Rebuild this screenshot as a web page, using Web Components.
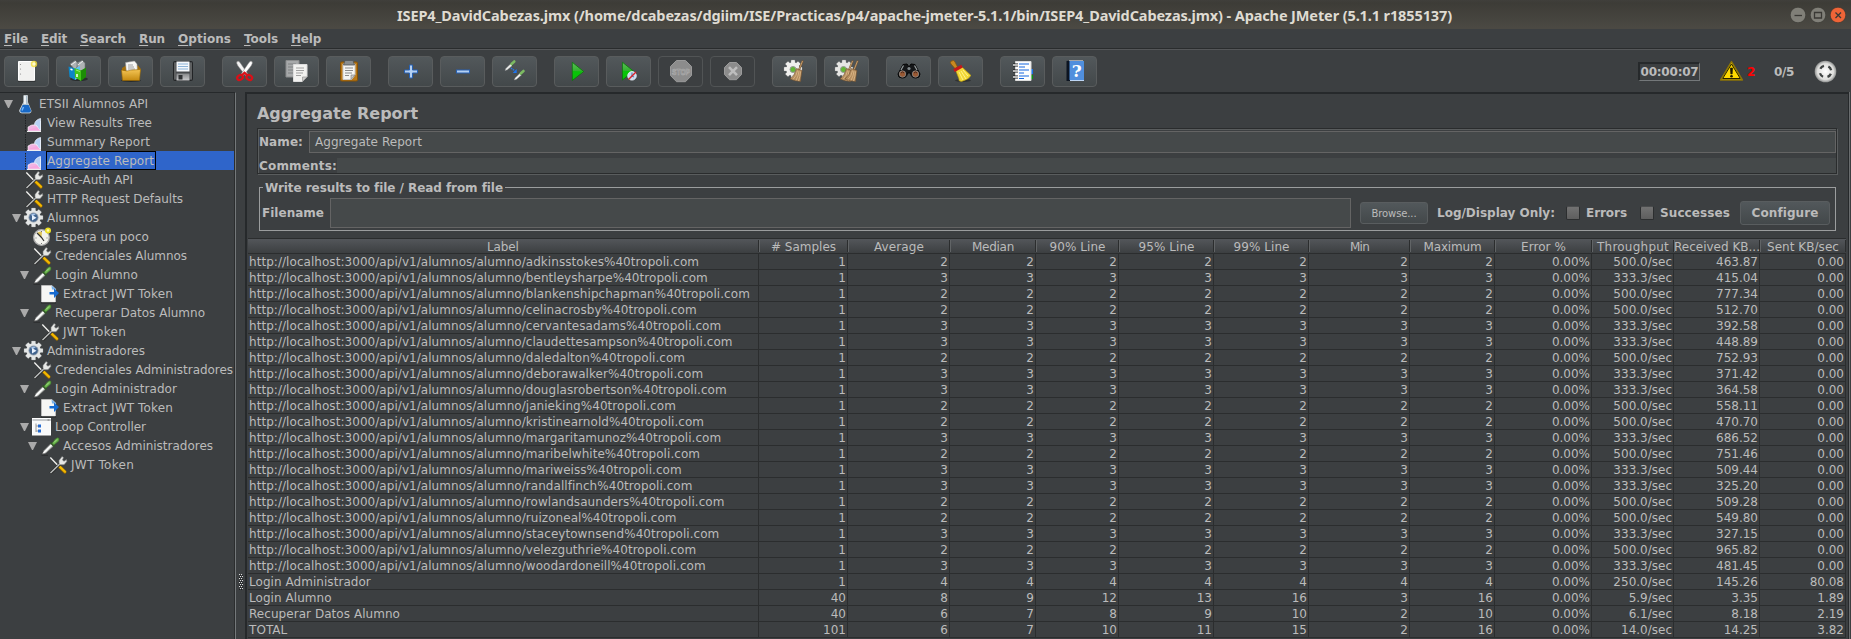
<!DOCTYPE html>
<html lang="es">
<head>
<meta charset="utf-8">
<title>Apache JMeter</title>
<style>
html,body{margin:0;height:100%;overflow:hidden;background:#3c3f41}
body{font-family:"DejaVu Sans",sans-serif;font-size:12px;color:#bbb}
</style>
</head>
<body>
<jm-app></jm-app>
<script>
const define=(name,css,html,init)=>customElements.define(name,class extends HTMLElement{
  connectedCallback(){
    if(this.shadowRoot)return;
    const r=this.attachShadow({mode:'open'});
    r.innerHTML='<style>*{box-sizing:border-box}'+css+'</style>'+(typeof html==='function'?html(this):html);
    if(init)init(this,r);
  }
});

/* 25px toolbar glyphs and 20px tree glyphs */
const gear=(cx,cy,r,fill,stroke)=>{
  let t='';
  for(let i=0;i<8;i++)t+=`<rect x="${cx-r*.22}" y="${cy-r}" width="${r*.44}" height="${r*.5}" rx=".6" transform="rotate(${i*45} ${cx} ${cy})"/>`;
  return `<g fill="${fill}" stroke="${stroke}" stroke-width=".3">${t}<circle cx="${cx}" cy="${cy}" r="${r*.76}" stroke="none"/></g>`;
};
const grad=(id,a,b,h)=>`<linearGradient id="${id}" x1="0" y1="0" x2="${h?1:0}" y2="${h?0:1}"><stop stop-color="${a}"/><stop offset="1" stop-color="${b}"/></linearGradient>`;
const broom=(dx)=>`<g transform="translate(${dx} 0)"><path d="M20.800 1.500L17 11" stroke="#7b5836" stroke-width="2"/><path d="M20.500 2L17 11" stroke="#c29c6b" stroke-width="1"/><path d="M14.500 9.500L20 11.500Q19 17 18.500 22.500Q13 22 8 20Q13 16 14.500 9.500Z" fill="#b48c5e" stroke="#70502f" stroke-width=".6"/><path d="M15.500 11.500Q14.500 17 11 20.500M17 12Q16.500 17 14 21.500M18.500 12.500Q18 18 16.500 22" stroke="#dfbc8c" stroke-width=".8" fill="none"/></g>`;
const dropper=`<path d="M1.500 19.300H8" stroke="#26282a" stroke-width=".8"/><path d="M2.500 18L4 14.500L11 7.500L13.500 10L6 17Z" fill="#d3d7d3" stroke="#777" stroke-width=".7"/><path d="M3.500 17L12 8.500" stroke="#fff" stroke-width="1.200"/><path d="M10.500 6.500L14.500 10.500" stroke="#315528" stroke-width="1.800"/><path d="M12 7.500L15 3.500Q17.500 .8 19 2.500Q19.500 4.500 17 6.500L13.800 9Z" fill="#69b34c" stroke="#3e7929" stroke-width=".6"/><path d="M14 6.500L17 3.500" stroke="#a8de8d"/>`;
const mini=`<path d="M.8 10.200L1.600 8.200L6.500 3.600L8 5.200L3 9.600Z" fill="#eef0ee" stroke="#999" stroke-width=".4"/><path d="M6 3L8.600 5.600" stroke="#315528" stroke-width="1"/><path d="M7.200 3.800L10 1.300" stroke="#7cba62" stroke-width="2.600" stroke-linecap="round"/>`;
const play=(s)=>`<defs>${grad('p','#5fbf5a','#00a400')}</defs><path d="M8.300 3.300L19.700 12.500L8.300 21.500Z" transform="${s||''}" fill="url(#p)" stroke="#087a08" stroke-width=".8"/><path d="M9 12L18.500 12.400L9 20.200Z" transform="${s||''}" fill="#08c408"/>`;
const ICONS={
 new:`<path d="M4.500 2.500H20.500V21.500H4.500Z" fill="#f1f1ef" stroke="#fff"/><path d="M4 22.300H21.500" stroke="#282a2b" stroke-width=".8"/><g fill="#888"><circle cx="6.500" cy="5.500" r=".6"/><circle cx="6.500" cy="10" r=".6"/><circle cx="6.500" cy="15" r=".6"/></g><circle cx="20" cy="5" r="3.200" fill="#f2df39" opacity=".8"/><circle cx="20" cy="5" r="1.700" fill="#fffbd0"/>`,
 templates:`<ellipse cx="13" cy="20" rx="9" ry="2" fill="#292c2e"/><path d="M4 5L9 1.500L13 5L9 11ZM11 4L16 1.500L19 4V11L11 12Z" fill="#aeb2b4" stroke="#6c7072" stroke-width=".6"/><path d="M5 6L10 2.500M12 6L17 2" stroke="#eee"/><path d="M2.500 7.500L9 9.500V21L3.500 18Z" fill="#0d86c7"/><path d="M9 9.500L14 7V18L9 21Z" fill="#5fc3f1"/><path d="M4.500 10L6.500 11" stroke="#fff" stroke-width="1.500"/><path d="M8.500 9L15 11.500V22L9 18.500Z" fill="#43c71a"/><path d="M15 11.500L20 8.500V18L15 22Z" fill="#1c8c05"/><path d="M10 11L14 12.500" stroke="#96ee6e"/><path d="M11 15V18" stroke="#fff" stroke-width="1.500"/>`,
 open:`<defs>${grad('o','#f4c555','#c58a10')}</defs><ellipse cx="13" cy="21.500" rx="10" ry="1.500" fill="#292c2e"/><path d="M4 9L8 6.500H20L22.500 9.500V13H4Z" fill="#a16d0b"/><path d="M7.500 3.500L16.500 2L19 5L19.500 14H8.500Z" fill="#f7f7f5" stroke="#999" stroke-width=".5"/><path d="M10 6H15M10 8H16M10 10H17" stroke="#888" stroke-width=".8"/><path d="M3.500 11Q9 13 14 11L22.500 10.500L21.500 21.500H4.500Z" fill="url(#o)" stroke="#9b6800" stroke-width=".6"/>`,
 save:`<defs>${grad('s','#858789','#c9cacc')}</defs><rect x="3.500" y="2.500" width="19" height="19" rx="1" fill="#474a4d" stroke="#222426"/><path d="M5 4V20M21 4V20" stroke="#777"/><rect x="6.500" y="2.500" width="13" height="10" fill="#f5f8fc"/><path d="M8 5H18M8 7.500H18M8 10H18" stroke="#8db4d8"/><rect x="6.500" y="14.500" width="13" height="7" fill="url(#s)"/><rect x="8.500" y="16" width="4" height="4.500" fill="#303335"/>`,
 cut:`<path d="M5 2.500Q4 4 6 7L13.500 16.500L15.500 14.500L8 3.500Q6.500 1.500 5 2.500Z" fill="#f3f3f3" stroke="#888" stroke-width=".5"/><path d="M20 2.500Q21 4 19 7L11.500 16.500L9.500 14.500L17 3.500Q18.500 1.500 20 2.500Z" fill="#fff" stroke="#888" stroke-width=".5"/><g fill="none" stroke="#d91018" stroke-width="2.200"><ellipse cx="8" cy="18.500" rx="3" ry="2.300" transform="rotate(-35 8 18.500)"/><ellipse cx="17.300" cy="18.500" rx="3" ry="2.300" transform="rotate(35 17.300 18.500)"/><path d="M10 16L12.500 13.800L15.200 16"/></g>`,
 copy:`<path d="M2 1.500H15V18H2Z" fill="#a7a9aa" stroke="#8a8c8d"/><path d="M4 5H12M4 8H9M4 11H9M4 14H9" stroke="#7f8182"/><path d="M9.500 5.500H23V18L18.500 22.500H9.500Z" fill="#f2f2f0" stroke="#ddd"/><path d="M12 9H20M12 11.500H20M12 14H19M12 16.500H17" stroke="#a1a1a1"/><path d="M18.500 22.500V18H23Z" fill="#cfcfcd" stroke="#888" stroke-width=".6"/>`,
 paste:`<rect x="4.500" y="3" width="17" height="19" rx="1.300" fill="#b97818" stroke="#865205"/><path d="M7 5H19V16L15.500 20.500H7Z" fill="#f5f5f3" stroke="#ccc"/><path d="M9 1.500H17L18.500 6H7.500Z" fill="#898d8f" stroke="#505456" stroke-width=".8"/><path d="M9 9H17M9 11.500H17M9 14H16M9 16.500H13" stroke="#8b8b8b"/><path d="M15 20.500V16H19Z" fill="#ccc" stroke="#777" stroke-width=".6"/>`,
 plus:`<path d="M11.500 6H14.500V11H19.500V14H14.500V19H11.500V14H6.500V11H11.500Z" fill="#b4d0f2" stroke="#2861b2"/>`,
 minus:`<rect x="6.500" y="11" width="13" height="3" fill="#b4d0f2" stroke="#2861b2"/>`,
 toggle:`<g transform="translate(2.300 1.200)">${mini}</g><g transform="translate(11.500 10.700)">${mini}</g><path d="M9 9L13 12" stroke="#2477ea" stroke-width="1.300" stroke-dasharray="1.500 .8"/><path d="M14.700 10V14H10.700Z" fill="#1c74f0"/>`,
 start:play(),
 nopause:play('translate(-1.700 0) scale(.98)')+`<circle cx="16" cy="16.800" r="4.300" fill="#c8daf0" stroke="#eef4fb" stroke-width=".8"/><path d="M16 13.500V17L18 18" stroke="#4876a7"/><path d="M12.500 20.500L20 13" stroke="#da2229" stroke-width="1.500"/>`,
 stop:`<path d="M8.500 1.500H17.500L23.500 7.500V16.500L17.500 22.700H8.500L2.500 16.500V7.500Z" fill="#8c8c8c" stroke="#9a9a9a"/><text x="13" y="15.600" text-anchor="middle" textLength="18" lengthAdjust="spacingAndGlyphs" font-family="Liberation Sans" font-size="9.500" fill="#8c8c8c" stroke="#b0b0b0" stroke-width=".6">STOP</text>`,
 shutdown:`<path d="M9.500 3.500H16.500L21.500 8.500V15.500L16.500 20.700H9.500L4.500 15.500V8.500Z" fill="#8c8c8c" stroke="#9b9b9b"/><path d="M9 8.200L17 16.200M17 8.200L9 16.200" stroke="#bdbdbd" stroke-width="2.600"/>`,
 clear:gear(11,10,9,'#f0f0ee','#999')+`<circle cx="11" cy="10.500" r="3" fill="#62b735" stroke="#999"/>`+broom(0),
 clearall:gear(10,10,9,'#e6e6e4','#999')+`<circle cx="9.500" cy="10.500" r="3" fill="#62b735" stroke="#999"/>`+broom(-2)+broom(3),
 search:`<path d="M7 5.500L11 5L13 8L15 5L19 5.500L24 15Q24 19 20 19Q15 19 14.500 14H11.500Q11 19 6 19Q2 19 2 15Z" fill="#151719" stroke="#050505"/><path d="M7.500 6.500L5 11M18.500 6.500L21 11" stroke="#92989a" stroke-width="1.300"/><circle cx="6.500" cy="15" r="3.200" fill="#9a5a34" stroke="#888" stroke-width=".8"/><circle cx="19.500" cy="15" r="3.200" fill="#9a5a34" stroke="#888" stroke-width=".8"/><path d="M5 14Q6.500 12 8 14M18 14Q19.500 12 21 14" stroke="#4b2619" fill="none"/><circle cx="13" cy="9.500" r="1.600" fill="#80878a"/>`,
 searchclear:`<ellipse cx="15" cy="21.500" rx="8" ry="1.500" fill="#303234"/><path d="M3 2.200Q6 .5 7 3L9.500 8L7 9.500L3 5Q1.800 3.500 3 2.200Z" fill="#c88921" stroke="#855209" stroke-width=".7"/><path d="M7.500 11L14 8L23 16.500Q20 21 13.500 22.500Q10 22 11 20Z" fill="#f1d736" stroke="#b99a09" stroke-width=".6"/><path d="M11 13L15 21M13 12L18 20M15 11L20 17" stroke="#fff38a"/><path d="M6 11.700L14 7.200" stroke="#c5171a" stroke-width="3.200"/>`,
 func:`<rect x="19" y="10" width="4" height="5" fill="#1972e8"/><rect x="19" y="16" width="4" height="4" fill="#0a910f"/><path d="M5.500 2.500H21V21.500H5.500Z" fill="#fdfdfd" stroke="#ddd"/><path d="M9 5H19M9 8H15M9 11H19M9 14H14M9 17H19M9 19.500H14" stroke="#1466df" stroke-width="1.200"/><path d="M3 6H8M3 12H8M3 18H8" stroke="#17191a" stroke-width="3.200"/><path d="M3 6H8M3 12H8M3 18H8" stroke="#eee" stroke-width="1.500"/>`,
 help:`<path d="M4.500 2L8 1.500V22H4.500Z" fill="#0c1421"/><rect x="7.500" y="2" width="14.500" height="19" fill="#508fdd"/><path d="M7 1.500H21" stroke="#bbb" stroke-width=".8"/><path d="M8 21.500H22" stroke="#bed6f5"/><text x="14.800" y="17.700" text-anchor="middle" font-family="DejaVu Serif" font-size="17" fill="#fff">?</text>`,
 warn:`<path d="M12.500 2.500L23.500 21H1.500Z" fill="#d9b400" stroke="#8c7407" stroke-width="1.400" stroke-linejoin="round"/><path d="M12.500 5L21.300 19.500H3.700Z" fill="#ffd900" stroke="#262100" stroke-width="1"/><path d="M11.400 9H13.600L13.200 15H11.800Z" fill="#1b1700" stroke="#1b1700" stroke-width=".6"/><circle cx="12.500" cy="17.200" r="1.300" fill="#1b1700"/>`,
 remote:`<defs><radialGradient id="r"><stop stop-color="#fff"/><stop offset=".75" stop-color="#dededc"/><stop offset="1" stop-color="#919392"/></radialGradient></defs><circle cx="12.500" cy="12.500" r="10.800" fill="url(#r)"/><circle cx="12.500" cy="12.500" r="5.800" fill="none" stroke="#404443" stroke-width="2.300" stroke-dasharray="4.500 4.610" stroke-dashoffset="-2.300"/>`,
 flask:`<path d="M7.800 1.500V8L3.500 16.500Q3.500 19 6 19H13.500Q15.500 18.500 15 16.500L11.500 8V1.500Z" fill="#a9bdcc" stroke="#dfe6ea" stroke-width=".7"/><path d="M6.700 11H12.700L15 16.500Q15 18.500 13 18.500H6Q4 18.500 4.500 16Z" fill="#1768c6"/><path d="M7.500 13L6 16.500" stroke="#73b7ff" stroke-width="1.500"/><path d="M9 2V10" stroke="#fff" stroke-width="1.500"/>`,
 graph:`<path d="M1.500 2V18.500" stroke="#202224" stroke-dasharray="1.500 1"/><path d="M4 18V14Q8 11 11 12Q14 14 16.500 8V18Z" fill="#f2b4e3" stroke="#fff" stroke-width=".6"/><path d="M10.500 11.500Q11 7 16.500 5.500V17Q14 16.500 13 13Z" fill="#b7d0f4" stroke="#eef5ff" stroke-width=".8"/><path d="M4.500 17L13 14L16 17.500H4.500Z" fill="#f6a7df"/><path d="M3 18.500H17" stroke="#eee"/>`,
 tools:`<path d="M2.300 2.500L10.500 11" stroke="#f4f4f1" stroke-width="1.300"/><path d="M11.300 11.500L17 17" stroke="#9a6a00" stroke-width="3.200" stroke-linecap="round"/><path d="M11.500 11.500L17 16.800" stroke="#f3b900" stroke-width="2.200" stroke-linecap="round"/><path d="M12.300 8.700L2.500 18.300" stroke="#222" stroke-width="2.800"/><path d="M12.300 8.500L2.500 18" stroke="#b8bbba" stroke-width="1.600"/><path d="M11 8.500V5.500L14 1.500L15.500 2.500L14.500 5L16 6.200L18.500 4.500L18.800 6.500L16 9.700H12.500Z" fill="#e6e7e5" stroke="#77797a" stroke-width=".6"/>`,
 gear:gear(9.500,9.500,9.500,'#e4e6e6','#8e9496')+`<circle cx="9.500" cy="9.500" r="4.600" fill="#41648f" stroke="#8a97a5" stroke-width=".8"/><path d="M6.500 7Q9 4.500 12 6L9 8Z" fill="#a6c4e8"/><path d="M8 7L12.500 9.800L8 12.500Z" fill="#e9f2ff"/>`,
 timer:`<circle cx="9.500" cy="10.500" r="7.800" fill="#f2f2ed" stroke="#aaa" stroke-width="1.300"/><path d="M9.500 10.500L5 6Q8 3.500 10 5Z" fill="#dfc55c"/><path d="M5 6L9.500 10.500L12 14" stroke="#333" stroke-width="1.200" fill="none"/><path d="M9.500 4V5M3.500 11H4.500M14.500 11H15.500M9.500 16V17" stroke="#777"/><circle cx="16" cy="3.500" r="3" fill="#ecdf23"/><circle cx="16" cy="3.500" r="1.300" fill="#fffcae"/>`,
 dropper,
 extract:`<path d="M1 18.800H16" stroke="#17191a"/><path d="M1.500 1.500H12L15.500 5V18H1.500Z" fill="#f6f6f4" stroke="#ddd" stroke-width=".5"/><path d="M11.500 1.500L16.500 5.500H12Z" fill="#79b0e8"/><path d="M9.500 8H14V4.500L19 9L14 14V10.500H9.500Z" fill="#176bd0"/>`,
 loop:`<rect x=".5" y="1.500" width="18" height="16.500" fill="#f8f9f9" stroke="#fff"/><path d="M.5 3H19" stroke="#c7cacc" stroke-width="2"/><path d="M15.500 3H17.500" stroke="#777"/><path d="M4 6.500V15M4 9H6M4 14H6" stroke="#999" fill="none"/><rect x="6" y="7.500" width="3" height="3" fill="#246bd1"/><rect x="6" y="12.500" width="3" height="3" fill="#246bd1"/>`
};
define('jm-icon',':host{display:block;flex:none;width:var(--s,25px);height:var(--s,25px)}svg{display:block;width:100%;height:100%;overflow:visible}',
 e=>{const s=e.getAttribute('size')||25;e.style.setProperty('--s',s+'px');return `<svg viewBox="0 0 ${s} ${s}" fill="none">${ICONS[e.getAttribute('name')]}</svg>`});

/* single-line label; w spreads the letters over a given width */
define('jm-label',':host{display:inline-block;white-space:pre}span{display:inline-block}','<span><slot></slot></span>',(e,r)=>{
  const w=+e.getAttribute('w');if(!w)return;
  const s=r.querySelector('span'),n=e.textContent.length,c=s.getBoundingClientRect().width;
  s.style.letterSpacing=((w-c)/n)+'px';e.style.width=w+'px';
});

define('jm-titlebar',`:host{display:flex;height:29px;align-items:center;position:relative;background:linear-gradient(#403f3b 0,#3d3c37 10%,#4b4943 96%,#4b4943);font:bold 14.500px "Noto Sans",sans-serif;color:#dfdbd2}
 jm-label{margin-left:397px;margin-top:1px}nav{margin-left:auto;margin-right:5px;display:flex;gap:4px;padding-top:1px}svg{display:block}`,
 `<jm-label w="1055">ISEP4_DavidCabezas.jmx (/home/dcabezas/dgiim/ISE/Practicas/p4/apache-jmeter-5.1.1/bin/ISEP4_DavidCabezas.jmx) - Apache JMeter (5.1.1 r1855137)</jm-label><nav>${[['#807f78','M4.500 8.500H12'],['#807f78','M4.500 5.500H11.500V11H4.500Z'],['#ef6437','M5.500 5.500L11 11M11 5.500L5.500 11']].map(a=>`<svg width="16" height="16" fill="none"><circle cx="8" cy="8" r="7.800" fill="${a[0]}" stroke="#33322e" stroke-width=".6"/><path d="${a[1]}" stroke="#3a3935" stroke-width="1.300"/></svg>`).join('')}</nav>`);

define('jm-menubar',':host{display:flex;height:19px;align-items:center;padding-left:4px;gap:13px;font-weight:bold;border-bottom:0}u{text-underline-offset:2px}',
 [['File',24],['Edit',26],['Search',46],['Run',26],['Options',53],['Tools',34],['Help',30]].map(([t,w])=>`<jm-label w="${w}"><u>${t[0]}</u>${t.slice(1)}</jm-label>`).join(''));

define('jm-tool',`:host{display:flex;width:45px;height:31px;align-items:flex-start;justify-content:center;padding-top:2px;border:1px solid #595c5d;border-radius:4px;background:linear-gradient(#52585b,#43484a);box-sizing:border-box}:host([off]){background:none;border-color:#515455}`,
 e=>`<jm-icon name="${e.getAttribute('icon')}"></jm-icon>`);
define('jm-toolbar',`:host{display:flex;height:44px;box-sizing:border-box;border-top:1px solid #2a2c2d;box-shadow:inset 0 1px #555759;padding:7px 0 0 4px;font-weight:bold;position:relative}
 .g{display:flex;gap:7px;margin-right:17px}.s{margin-left:auto;display:flex;height:31px;align-items:center;padding-right:13px}
 .t{border:1px solid #26292b;border-width:2px 1px 1px 2px;border-right-color:#74787a;border-bottom-color:#74787a;height:19px;width:62px;display:flex;align-items:center;justify-content:center}`,
 [['new','templates','open','save'],['cut','copy','paste'],['plus','minus','toggle'],['start','nopause','stop','shutdown'],['clear','clearall'],['search','searchclear'],['func','help']].map(g=>`<div class="g">${g.map(i=>`<jm-tool icon="${i}"${i=='stop'||i=='shutdown'?' off':''}></jm-tool>`).join('')}</div>`).join('')+
 `<div class="s"><div class="t"><jm-label w="58">00:00:07</jm-label></div><jm-icon name="warn" style="margin-left:19px"></jm-icon><jm-label w="9" style="color:#f00;margin-left:3px">2</jm-label><jm-label w="20" style="margin:0 19px 0 18px">0/5</jm-label><jm-icon name="remote"></jm-icon></div>`);

define('jm-node',`:host{display:flex;height:19px;align-items:center;position:relative;padding-left:calc(var(--l)*8px + 4px);white-space:pre}
 :host([sel]){background:#2f65ca}i{width:10px;flex:none;margin-right:2px}i.o{border:4.500px solid transparent;border-top:8px solid #aaa;border-bottom:0;width:9px;margin-right:3px}
 b{font-weight:normal;height:19px;padding:1px 2px 0 1px;margin-left:2px;line-height:19px;display:block}:host([sel]) b{box-shadow:inset 0 0 0 1px #000}jm-icon{align-self:flex-start}`,
 e=>`<i class="${e.hasAttribute('open')?'o':''}"></i><jm-icon size="20" name="${e.getAttribute('icon')}"></jm-icon><b><jm-label w="${e.getAttribute('w')}">${e.getAttribute('text')}</jm-label></b>`);
const TREE=[[0,1,'flask','ETSII Alumnos API',109],[1,0,'graph','View Results Tree',105],[1,0,'graph','Summary Report',103],[1,0,'graph','Aggregate Report',107],[1,0,'tools','Basic-Auth API',86],[1,0,'tools','HTTP Request Defaults',136],[1,1,'gear','Alumnos',52],[2,0,'timer','Espera un poco',94],[2,0,'tools','Credenciales Alumnos',132],[2,1,'dropper','Login Alumno',83],[3,0,'extract','Extract JWT Token',110],[2,1,'dropper','Recuperar Datos Alumno',150],[3,0,'tools','JWT Token',63],[1,1,'gear','Administradores',98],[2,0,'tools','Credenciales Administradores',178],[2,1,'dropper','Login Administrador',122],[3,0,'extract','Extract JWT Token',110],[2,1,'loop','Loop Controller',91],[3,1,'dropper','Accesos Administradores',150],[4,0,'tools','JWT Token',63]];
define('jm-tree',':host{display:block;width:236px;box-sizing:border-box;flex:none;border-top:1px solid #26292b;border-right:1px solid #74787a;box-shadow:inset -1px 0 #2b2d2e;padding:1px 1px 0 0;overflow:hidden}',
 TREE.map((n,k)=>`<jm-node style="--l:${n[0]}"${n[1]?' open':''}${k==3?' sel':''} icon="${n[2]}" text="${n[3]}" w="${n[4]}"></jm-node>`).join(''));

define('jm-splitter',':host{display:flex;width:9px;flex:none;justify-content:center;padding-top:482px;box-sizing:border-box}svg{display:block}',
 '<svg width="4" height="16"><defs><pattern id="g" width="4" height="4" patternUnits="userSpaceOnUse"><path d="M0 0h1v1h-1zM2 0h1v1h-1zM1 2h1v1h-1zM3 2h1v1h-1z" fill="#ddd"/><path d="M1 1h1v1h-1zM3 1h1v1h-1zM0 3h1v1h-1zM2 3h1v1h-1z" fill="#1c1e1f"/></pattern></defs><rect width="4" height="16" fill="url(#g)"/></svg>');

define('jm-field',':host{display:block;box-sizing:border-box;background:#45494a;border:1px solid #646464;padding-left:5px}','<slot></slot>');
define('jm-button',':host{display:flex;align-items:center;justify-content:center;box-sizing:border-box;border:1px solid #595d5f;border-radius:3px;background:linear-gradient(#52585b,#43484a)}','<slot></slot>');
define('jm-check',':host{display:block;width:14px;height:14px;box-sizing:border-box;border:1px solid #2c2e2f;border-top-color:#4a4c4d;border-radius:2px;background:linear-gradient(#727272,#5e5e5e)}','');

define('jm-form',`:host{display:block;padding-left:10px;height:144px;box-sizing:border-box}
 h1{margin:0;font-size:16px;line-height:20px;padding-top:10px;height:34px}
 .e{border:1px solid #2a2c2d;box-shadow:inset 1px 1px #5a5d5e,1px 1px #5a5d5e;padding:2px 0 0 1px;font-weight:bold;width:1580px;height:46px}
 .r{display:flex;align-items:center}.n{height:22px;justify-content:space-between}.n jm-field{width:1527px;height:22px;line-height:20px;font-weight:normal}
 .c{margin-top:5px;height:15px}.c span{flex:1;height:15px;background:#45494a}
 .f{position:relative;margin:13px 0 0 2px;width:1577px;height:44px;border:1px solid #9b9d9e;font-weight:bold;padding:10px 0 0 2px;display:flex;align-items:flex-start}
 .l{position:absolute;left:3px;top:-8px;background:#3c3f41;padding:0 2px 0 2px;line-height:16px}
 .f>*{flex:none}.x{line-height:30px}`,
 `<h1><jm-label w="161">Aggregate Report</jm-label></h1>
 <div class="e"><div class="r n"><jm-label w="44">Name:</jm-label><jm-field><jm-label w="107">Aggregate Report</jm-label></jm-field></div><div class="r c"><jm-label w="78">Comments:</jm-label><span></span></div></div>
 <div class="f"><div class="l"><jm-label w="238">Write results to file / Read from file</jm-label></div><jm-label class="x" w="62">Filename</jm-label><jm-field style="margin-left:6px;width:1021px;height:30px"></jm-field>
 <jm-button style="margin:4px 0 0 9px;width:68px;height:22px;font-size:10px;font-weight:normal"><jm-label w="45">Browse...</jm-label></jm-button>
 <jm-label class="x" w="118" style="margin-left:9px">Log/Display Only:</jm-label><jm-check style="margin:8px 6px 0 11px"></jm-check><jm-label class="x" w="41">Errors</jm-label><jm-check style="margin:8px 6px 0 13px"></jm-check><jm-label class="x" w="70">Successes</jm-label><jm-button style="margin:3px 0 0 10px;width:90px;height:24px"><jm-label w="67">Configure</jm-label></jm-button></div>`);

const U='adkinsstokes,bentleysharpe,blankenshipchapman,celinacrosby,cervantesadams,claudettesampson,daledalton,deborawalker,douglasrobertson,janieking,kristinearnold,margaritamunoz,maribelwhite,mariweiss,randallfinch,rowlandsaunders,ruizoneal,staceytownsend,velezguthrie,woodardoneill'.split(',');
const N=[2,3,2,2,3,3,2,3,3,2,2,3,2,3,3,2,2,3,2,3];
const KB='463.87,415.04,777.34,512.70,392.58,448.89,752.93,371.42,364.58,558.11,470.70,686.52,751.46,509.44,325.20,509.28,549.80,327.15,965.82,481.45'.split(',');
const ROWS=U.map((u,i)=>['http://localhost:3000/api/v1/alumnos/alumno/'+u+'%40tropoli.com',1,...Array(7).fill(N[i]),'0.00%',N[i]==2?'500.0/sec':'333.3/sec',KB[i],'0.00'])
 .concat([['Login Administrador',1,4,4,4,4,4,4,4,'0.00%','250.0/sec','145.26','80.08'],['Login Alumno',40,8,9,12,13,16,3,16,'0.00%','5.9/sec','3.35','1.89'],['Recuperar Datos Alumno',40,6,7,8,9,10,2,10,'0.00%','6.1/sec','8.18','2.19'],['TOTAL',101,6,7,10,11,15,2,16,'0.00%','14.0/sec','14.25','3.82']]);
const HEAD=['Label','# Samples','Average','Median','90% Line','95% Line','99% Line','Min','Maximum','Error %','Throughput','Received KB...','Sent KB/sec'];
const HW=[32,65,50,42,56,56,56,19,58,45,72,86,72];
define('jm-table',`:host{display:block;padding-left:1px;width:1600px;box-sizing:border-box}
 .r{display:grid;grid-template-columns:511px 89px 102px 86px 83px 95px 95px 101px 85px 97px 82px 86px 86px;height:16px;line-height:16.500px;white-space:pre;width:1598px}
 .r span{border:1px solid #2b2d2e;border-width:0 1px 1px 0;text-align:right;padding-right:1px;overflow:hidden}.r span:first-child{text-align:left;padding-left:1px;letter-spacing:.05px}
 .h{border-top:1px solid #2b2d2e;border-bottom:1px solid #2b2d2e;background:linear-gradient(#53565a,#3c3f41)}
 .h span{border-bottom:0;padding:1px 0 0!important;border-left:1px solid #616466;height:12px;margin-top:1px;line-height:14px;overflow:visible;display:flex;justify-content:center;align-items:center}.h span:first-child{border-left:0}`,
 `<div class="r h">${HEAD.map((h,i)=>`<span><jm-label w="${HW[i]}">${h}</jm-label></span>`).join('')}</div>`+ROWS.map(r=>`<div class="r">${r.map(c=>`<span>${c}</span>`).join('')}</div>`).join(''));

define('jm-report',':host{display:block;flex:1;box-sizing:border-box;min-width:0;border:2px solid #26292b;border-width:2px 1px 0 2px;margin-right:2px;box-shadow:1px 0 #696c6e}','<jm-form></jm-form><jm-table></jm-table>');
define('jm-app',':host{display:flex;flex-direction:column;width:1851px;height:639px;overflow:hidden}main{display:flex;flex:1;min-height:0}',
 '<jm-titlebar></jm-titlebar><jm-menubar></jm-menubar><jm-toolbar></jm-toolbar><main><jm-tree></jm-tree><jm-splitter></jm-splitter><jm-report></jm-report></main>');
</script>
</body>
</html>
